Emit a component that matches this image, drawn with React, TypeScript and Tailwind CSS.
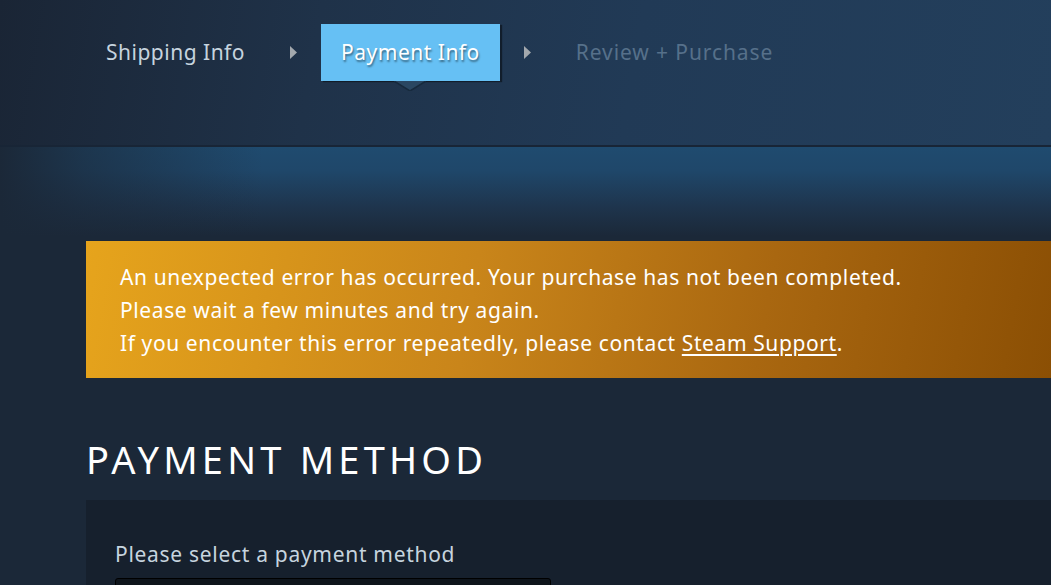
import React from "react";

const Arrow = () => (
  <div className="flex w-[56px] items-center justify-center">
    <svg width="7" height="13" viewBox="0 0 7 13">
      <path d="M0 0 L7 6.5 L0 13 Z" fill="#a3a8ad" />
    </svg>
  </div>
);

export default function App() {
  return (
    <div
      className="min-h-[585px] w-full overflow-hidden bg-[#1b2838]"
      style={{ fontFamily: '"Noto Sans", "Open Sans", sans-serif' }}
    >
      {/* header */}
      <div className="h-[145px] bg-[linear-gradient(100deg,#1a2535_0%,#1f3249_30%,#213a56_60%,#233f5c_100%)] pl-[86px] pt-[24px]">
        <div className="flex h-[57px] items-stretch text-[21px] tracking-[0.5px]">
          <div className="flex items-center px-5 text-[#c6d4df]">Shipping Info</div>
          <Arrow />
          <div className="relative flex items-center bg-[#66c0f4] px-5 text-white shadow-[2px_1px_1px_rgba(0,0,0,0.45)] [text-shadow:1px_2px_2px_rgba(0,0,0,0.45)]">
            Payment Info
            <svg
              className="absolute left-1/2 top-full -translate-x-1/2"
              width="32"
              height="10"
              viewBox="0 0 32 10"
            >
              <path d="M0 0 L32 0 L16 10 Z" fill="#2a4762" />
              <path d="M0 0 L16 10 L32 0" fill="none" stroke="#172a3d" strokeWidth="1.5" />
            </svg>
          </div>
          <Arrow />
          <div className="flex items-center px-5 tracking-[0.9px] text-[#56708a]">Review + Purchase</div>
        </div>
      </div>
      {/* band */}
      <div className="relative h-[96px] border-t-2 border-[#182536] bg-[linear-gradient(to_bottom,#1f4b6f_0%,#1f476a_25%,#1e344c_65%,#1b2838_95%)]">
        <div className="absolute inset-0 bg-[linear-gradient(to_right,#1b2838_0%,rgba(27,40,56,0.6)_8%,rgba(27,40,56,0)_25%)]" />
      </div>
      {/* error */}
      <div className="ml-[86px] h-[137px] bg-[linear-gradient(100deg,#e6a41c_0%,#c9851a_40%,#a96710_70%,#8b4f04_100%)] pl-[34px] pt-[20px] text-[21px] leading-[33px] tracking-[0.6px] text-white">
        <div>An unexpected error has occurred. Your purchase has not been completed.</div>
        <div>Please wait a few minutes and try again.</div>
        <div>
          If you encounter this error repeatedly, please contact{" "}
          <span className="underline underline-offset-[3px]">Steam Support</span>.
        </div>
      </div>
      {/* heading */}
      <div className="ml-[86px] pt-[57px] pb-[17px] text-[38px] leading-[48px] tracking-[4.2px] text-white">
        PAYMENT METHOD
      </div>
      {/* panel */}
      <div className="ml-[86px] h-[200px] bg-[#16202d] pl-[29px] pt-[40px]">
        <div className="text-[21px] leading-[28px] tracking-[0.7px] text-[#c6d4df]">Please select a payment method</div>
        <div className="mt-[10px] h-[40px] w-[436px] rounded-[3px] border border-[#000] bg-[#0e141b]" />
      </div>
    </div>
  );
}
